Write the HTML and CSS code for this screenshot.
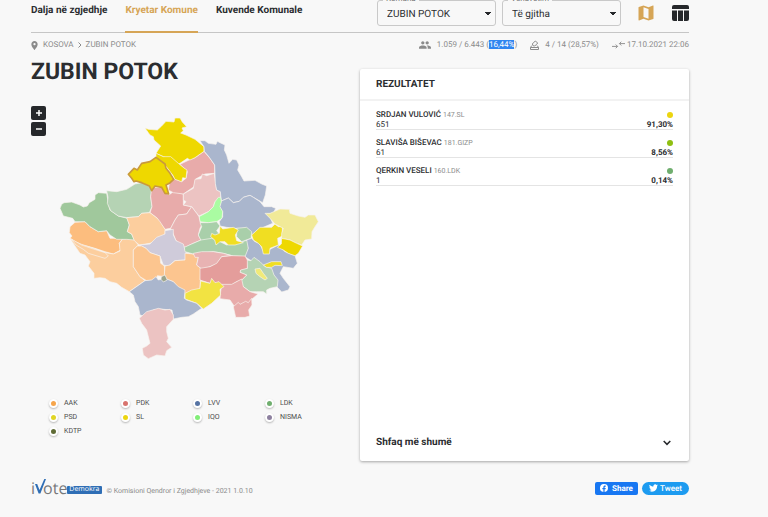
FILE: index.html
```html
<!DOCTYPE html>
<html lang="sq">
<head>
<meta charset="utf-8">
<meta name="viewport" content="width=device-width, initial-scale=1">
<title>Zubin Potok</title>
<link rel="stylesheet" href="styles.css">
</head>
<body>
<div class="page">
  <header class="topbar">
    <nav class="tabs">
      <a class="tab" href="#">Dalja në zgjedhje</a>
      <a class="tab tab-active" href="#">Kryetar Komune</a>
      <a class="tab" href="#">Kuvende Komunale</a>
    </nav>
    <div class="filters">
      <div class="field">
        <label for="komuna">Komuna</label>
        <select id="komuna"><option>ZUBIN POTOK</option></select>
      </div>
      <div class="field">
        <label for="vendvotim">Vendvotim</label>
        <select id="vendvotim"><option>Të gjitha</option></select>
      </div>
      <button class="view-btn" aria-label="Map"><svg width="20" height="20" viewBox="0 0 24 24" fill="#d6a556"><path fill-rule="evenodd" d="M20.500 3l-.16.030L15 5.100 9 3 3.360 4.900c-.21.070-.36.250-.36.480V20.500c0 .28.220.500.500.500l.16-.03L9 18.900l6 2.100 5.640-1.900c.21-.07.360-.25.360-.48V3.500c0-.28-.22-.5-.5-.5zM15 19l-6-2.110V5l6 2.110V19z"/></svg></button>
      <button class="view-btn" aria-label="Table"><svg width="17" height="16" viewBox="0 0 17 16" fill="#26282b"><path d="M2 0h13q2 0 2 2v2H0V2q0-2 2-2zM0 5.500h5V16H2q-2 0-2-2zM6 5.500h5V16H6zM12 5.500h5V14q0 2-2 2h-3z"/></svg></button>
    </div>
  </header>

  <div class="subbar">
    <nav class="crumbs">
      <svg width="7" height="9" viewBox="0 0 14 20" fill="#8b8b8b"><path fill-rule="evenodd" d="M7 0C3.130 0 0 3.130 0 7c0 5.250 7 13 7 13s7-7.750 7-13c0-3.870-3.130-7-7-7zm0 4.500a2.500 2.500 0 1 1 0 5 2.500 2.500 0 0 1 0-5z"/></svg>
      <a href="#">KOSOVA</a>
      <svg width="4" height="6" viewBox="0 0 4 6" fill="none" stroke="#8b8b8b" stroke-width="1"><path d="M.5.5 3 3 .5 5.500"/></svg>
      <a href="#">ZUBIN POTOK</a>
    </nav>
    <div class="stats">
      <span class="stat"><svg width="12" height="8" viewBox="1 5 22 14" fill="#8b8b8b"><path d="M16 11c1.660 0 2.990-1.340 2.990-3S17.660 5 16 5s-3 1.340-3 3 1.340 3 3 3zm-8 0c1.660 0 2.990-1.340 2.990-3S9.660 5 8 5 5 6.340 5 8s1.340 3 3 3zm0 2c-2.330 0-7 1.170-7 3.500V19h14v-2.500c0-2.330-4.670-3.500-7-3.500zm8 0c-.29 0-.62.020-.97.050 1.160.84 1.970 1.970 1.970 3.450V19h6v-2.500c0-2.330-4.670-3.500-7-3.500z"/></svg><span>1.059 / 6.443 (<mark>16,44%</mark>)</span></span>
      <span class="stat"><svg width="9" height="11" viewBox="0 0 18 22" fill="none" stroke="#8b8b8b" stroke-width="2"><path d="M4 11 1 14.500V19h16v-4.500L14 11M1 15h16M4.500 8l6-6 5 4-6 6H7z"/></svg><span>4 / 14 (28,57%)</span></span>
      <span class="stat"><svg width="13" height="8" viewBox="0 0 14 8" fill="none" stroke="#8b8b8b"><path d="M0 5.500h6M4 3.500l2 2-2 2M14 2.500H8M10 .5l-2 2 2 2"/></svg><span>17.10.2021 22:06</span></span>
    </div>
  </div>

  <main class="content">
    <section class="map-panel">
      <h1>ZUBIN POTOK</h1>
      <div class="map-area">
        <div class="zoom">
          <button aria-label="Zoom in"><svg width="8" height="8" viewBox="0 0 8 8" stroke="#fff" stroke-width="1.500"><path d="M4 1v6M1 4h6"/></svg></button>
          <button aria-label="Zoom out"><svg width="8" height="8" viewBox="0 0 8 8" stroke="#fff" stroke-width="1.500"><path d="M1 4h6"/></svg></button>
        </div>
        <svg class="map" viewBox="0 0 840 765" role="img" aria-label="Kosova">
          <polygon class="orange" points="60,350 75,337 105,335 120,350 145,365 170,362 180,385 218,385 208,400 212,420 190,432 165,425 135,415 110,408 95,405 75,395 60,385 66,378 58,368"/>
          <polygon class="orange-light" points="60,385 75,395 95,403 130,415 160,427 190,432 210,423 208,400 218,387 245,385 253,390 265,405 250,420 250,470 270,500 285,512 245,540 238,545 215,532 200,520 180,515 165,505 150,503 132,505 132,490 115,468 120,455 105,435 90,430 75,408"/>
          <polygon class="orange-light" points="64,387 78,405 100,418 115,430 165,445 175,438 165,428 130,417 95,405"/>
          <polygon class="green" points="30,295 35,283 42,278 65,276 90,285 100,291 112,288 118,278 135,268 135,255 145,248 170,250 175,280 180,300 205,318 232,325 238,345 232,365 245,372 253,390 230,388 200,388 180,375 170,362 145,365 120,350 105,335 75,335 68,325 40,318"/>
          <polygon class="green-light" points="170,242 200,245 230,238 255,222 275,218 298,228 307,240 302,260 306,290 298,308 275,310 265,320 230,323 205,318 182,302 172,280 174,262"/>
          <polygon class="rose" points="305,232 335,232 345,250 358,254 370,245 400,252 400,285 425,290 410,312 385,315 375,330 362,355 345,358 325,332 322,325 300,308 306,290 302,260"/>
          <polygon class="rose" points="370,205 395,215 408,205 412,185 390,163 417,150 435,143 462,124 480,145 494,165 494,190 465,192 437,207 432,230 400,252 370,248 355,240 358,220"/>
          <polygon class="pink" points="400,252 430,235 435,208 453,206 457,192 470,197 493,190 497,222 500,240 511,245 512,262 495,275 490,290 475,305 447,318 440,310 425,290 400,285 408,275 400,270"/>
          <polygon class="yellow" points="285,54 295,58 322,60 335,48 348,34 372,36 375,24 390,24 397,36 410,50 396,54 400,62 392,69 408,75 435,88 462,110 462,124 435,143 420,150 412,145 390,160 385,162 362,148 340,140 318,130 332,108 312,90 310,80 300,75 295,68"/>
          <polygon class="yellow" points="318,130 340,140 362,140 385,160 402,174 411,180 408,205 398,203 395,215 375,208 368,195 345,165 318,142"/>
          <polygon class="blue" points="450,92 465,92 475,100 498,103 502,94 510,98 525,105 523,120 530,135 537,160 548,148 560,150 567,165 563,180 575,200 582,213 615,211 635,222 650,228 646,255 638,278 610,262 600,256 580,262 568,274 550,278 535,264 514,273 511,245 500,240 496,220 494,165 478,142 463,124 462,110"/>
          <polygon class="blue" points="514,273 535,264 550,278 568,274 580,262 600,256 610,262 630,275 642,290 665,290 677,295 670,310 650,312 662,325 668,340 640,352 620,362 605,375 585,355 555,355 530,352 510,348 508,335 518,320 518,305 508,290"/>
          <polygon class="lime" points="505,262 512,262 514,275 510,290 518,305 516,325 500,335 475,338 450,335 447,320 475,305 490,290 495,275"/>
          <polygon class="orange-light" points="230,323 265,320 275,310 300,308 322,325 330,335 345,358 345,372 325,387 300,400 268,405 253,392 245,372 232,365 238,345"/>
          <polygon class="rose-light" points="362,355 375,330 385,315 410,312 425,290 440,310 447,320 450,335 455,345 450,355 445,375 453,390 425,402 405,412 390,402 378,392 370,372"/>
          <polygon class="lilac" points="268,405 300,402 320,382 345,372 345,362 370,358 370,375 378,392 400,402 405,420 412,435 405,450 375,452 355,468 340,465 330,438 300,428 288,415"/>
          <polygon class="orange-mid" points="250,420 262,408 275,408 288,415 300,428 330,438 332,460 343,468 345,500 322,497 318,510 290,512 270,500 250,470"/>
          <polygon class="orange-mid" points="345,468 360,465 375,452 405,450 405,430 430,432 445,442 440,465 452,475 450,540 420,545 408,555 390,540 370,515 350,508 343,495"/>
          <polygon class="green-mid" points="450,338 475,338 500,335 510,348 500,362 515,380 482,388 455,395 445,375 455,350"/>
          <polygon class="green-mid" points="403,412 425,402 453,390 485,385 500,390 530,405 575,395 595,390 595,415 590,440 550,438 520,430 490,425 470,428 430,432 405,425"/>
          <polygon class="green-mid" points="560,355 590,352 605,365 603,385 575,395 560,380"/>
          <polygon class="yellow-mid" points="485,370 495,375 508,370 510,348 518,357 550,352 565,360 556,375 560,392 580,398 555,405 535,405 525,395 510,395 498,405 494,390 482,380"/>
          <polygon class="blue" points="590,390 605,385 615,395 628,400 645,432 660,418 685,405 705,425 735,437 742,460 730,475 700,470 690,490 700,505 720,530 715,540 695,546 685,535 675,525 675,500 650,475 625,460 600,450 585,440 595,415"/>
          <polygon class="yellow-mid" points="605,375 630,352 665,352 675,342 685,350 697,350 697,378 683,385 685,405 660,415 658,432 640,432 635,410 625,400 610,390"/>
          <polygon class="cream" points="645,310 660,310 690,297 718,298 720,310 745,318 765,322 775,315 795,315 805,335 795,350 786,365 785,387 765,390 755,405 740,400 720,390 695,385 695,370 700,355 675,342 660,325"/>
          <polygon class="yellow" points="695,385 720,390 740,400 758,408 745,430 735,437 715,430 700,420 682,412 694,402"/>
          <polygon class="green-light" points="590,450 603,452 612,442 630,455 645,470 665,475 672,495 684,510 682,530 660,535 650,540 650,552 640,545 620,545 600,545 580,530 570,515 590,495 570,487 572,478 592,475"/>
          <polygon class="yellow-mid" points="640,465 665,455 693,455 697,467 675,466 665,472 650,472"/>
          <polygon class="cream-strong" points="615,477 630,475 640,490 652,505 645,510 630,500 618,490"/>
          <polygon class="rose-light" points="430,430 455,425 490,425 520,430 545,437 515,440 500,462 475,472 455,477 440,465 445,442 435,442"/>
          <polygon class="red" points="450,475 480,470 500,460 515,440 545,437 585,438 592,450 592,475 572,480 570,487 590,495 575,510 560,515 545,525 515,525 480,520 450,510"/>
          <polygon class="rose" points="515,523 545,523 575,507 580,530 600,545 624,552 605,568 600,590 555,592 540,570 510,566 512,545"/>
          <polygon class="rose" points="550,590 565,577 570,583 587,574 595,578 605,565 606,585 596,600 599,618 585,622 557,622"/>
          <polygon class="yellow-soft" points="405,550 425,540 450,535 452,513 480,520 485,505 495,518 507,515 522,530 510,538 512,555 485,580 460,597 440,580 405,567"/>
          <polygon class="blue" points="238,545 285,512 305,510 318,500 325,510 345,505 370,515 385,530 405,540 403,565 410,570 440,580 455,595 430,612 415,620 395,622 370,627 366,600 330,597 310,600 280,618 270,615 265,590 255,575 250,555"/>
          <polygon class="pink" points="268,625 290,605 325,595 345,600 360,598 370,615 370,628 350,650 350,665 355,685 350,695 365,712 350,722 345,738 320,735 295,746 280,735 277,715 290,708 300,700 290,660 275,640"/>
          <polygon class="olive" points="334,500 345,495 352,510 340,516 333,508"/>
          <polygon class="yellow selected" points="235,193 252,175 262,180 275,160 300,155 318,142 345,162 348,175 360,190 371,208 358,220 348,225 356,252 345,250 335,232 315,228 305,242 298,228 275,218 258,213 252,215 245,205"/>
        </svg>
      </div>
      <ul class="legend">
        <li><i class="dot aak"></i>AAK</li>
        <li><i class="dot pdk"></i>PDK</li>
        <li><i class="dot lvv"></i>LVV</li>
        <li><i class="dot ldk"></i>LDK</li>
        <li><i class="dot psd"></i>PSD</li>
        <li><i class="dot sl"></i>SL</li>
        <li><i class="dot iqo"></i>IQO</li>
        <li><i class="dot nisma"></i>NISMA</li>
        <li><i class="dot kdtp"></i>KDTP</li>
      </ul>
    </section>

    <section class="card">
      <h2>REZULTATET</h2>
      <ul class="results">
        <li>
          <div class="line"><span><b>SRDJAN VULOVIĆ</b> <small>147.SL</small></span><i class="mark sl"></i></div>
          <div class="line"><span>651</span><b>91,30%</b></div>
        </li>
        <li>
          <div class="line"><span><b>SLAVIŠA BIŠEVAC</b> <small>181.GIZP</small></span><i class="mark gizp"></i></div>
          <div class="line"><span>61</span><b>8,56%</b></div>
        </li>
        <li>
          <div class="line"><span><b>QERKIN VESELI</b> <small>160.LDK</small></span><i class="mark ldk"></i></div>
          <div class="line"><span>1</span><b>0,14%</b></div>
        </li>
      </ul>
      <button class="more">Shfaq më shumë<svg width="8" height="6" viewBox="0 0 8 6" fill="none" stroke="#26282b" stroke-width="1.500"><path d="M.7.9 4 4.300 7.300.9"/></svg></button>
    </section>
  </main>

  <footer class="footer">
    <div class="brand">
      <span class="logo"><span class="word">i<svg width="11" height="15" viewBox="0 0 11 15" fill="#2f6eb5"><path d="M0 5h2.200l2.300 6L9.300 0H11L5.400 14.500H3.600z"/></svg>ote</span><span class="tag">Demokra</span></span>
      <span class="copy">© Komisioni Qendror i Zgjedhjeve - 2021 1.0.10</span>
    </div>
    <div class="social">
      <button class="share"><svg width="8" height="8" viewBox="0 0 24 24" fill="#fff"><path d="M24 12a12 12 0 1 0-13.900 11.850v-8.400H7.100V12h3V9.400c0-3 1.800-4.700 4.500-4.700 1.300 0 2.700.24 2.700.24v3h-1.500c-1.500 0-2 .9-2 1.900V12h3.400l-.5 3.450h-2.900v8.400A12 12 0 0 0 24 12z"/></svg>Share</button>
      <button class="tweet"><svg width="9" height="8" viewBox="0 2 24 20" fill="#fff"><path d="M23.950 4.570a10 10 0 0 1-2.820.770 4.960 4.960 0 0 0 2.160-2.720c-.95.560-2 .96-3.130 1.180a4.920 4.920 0 0 0-8.380 4.480C7.690 8.090 4.070 6.130 1.640 3.160a4.920 4.920 0 0 0 1.520 6.570 4.900 4.900 0 0 1-2.230-.61v.06a4.920 4.920 0 0 0 3.950 4.830 5 5 0 0 1-2.210.080 4.940 4.940 0 0 0 4.600 3.420A9.870 9.870 0 0 1 0 19.540a14 14 0 0 0 7.550 2.210c9.050 0 14-7.500 14-13.980l-.02-.64a10 10 0 0 0 2.420-2.560z"/></svg>Tweet</button>
    </div>
  </footer>
</div>
</body>
</html>
```
FILE: styles.css
```css
* { box-sizing: border-box; }

body {
  margin: 0;
  background: #f8f8f8;
  color: #2b2d30;
  font-family: Roboto, "Liberation Sans", sans-serif;
  font-size: 10px;
  line-height: 14px;
  text-rendering: geometricPrecision;
}

button, select { font-family: inherit; color: inherit; text-rendering: inherit; }
button { padding: 0; border: 0; background: none; }
a { color: inherit; text-decoration: none; }
ul { margin: 0; padding: 0; list-style: none; }
svg { display: block; flex: none; }

.page { padding: 0 79px 0 31px; }

.topbar {
  display: flex;
  justify-content: space-between;
  height: 33px;
  border-bottom: 1px solid #c6c6c6;
}

.tabs { display: flex; gap: 18px; }

.tab {
  height: 33px;
  padding-top: 4px;
  font-size: 10px;
  font-weight: 700;
  white-space: nowrap;
}

.tab-active { color: #d6a556; border-bottom: 2px solid #d6a556; }

.filters { display: flex; align-items: center; gap: 6px; height: 26px; }
.field { position: relative; }

.field label {
  position: absolute;
  top: -7px;
  left: 6px;
  padding: 0 3px;
  background: #f8f8f8;
  color: #777;
  font-size: 8px;
  line-height: 12px;
}

.field select {
  display: block;
  width: 119px;
  height: 26px;
  padding: 2px 9px 0;
  border: 1px solid #c9c9c9;
  border-radius: 3px;
  appearance: none;
  background: linear-gradient(to bottom right, #26282b 50%, transparent 51%) no-repeat right 4px top 11px / 3px 4px,
    linear-gradient(to bottom left, #26282b 50%, transparent 51%) no-repeat right 7px top 11px / 3px 4px;
  font-size: 10px;
}

.view-btn { display: grid; place-items: center; width: 20px; margin-left: 9px; }
.view-btn:last-child { width: 17px; margin-left: 10px; }

.subbar {
  display: flex;
  justify-content: space-between;
  padding-top: 5px;
  color: #8b8b8b;
  font-size: 8px;
}

.crumbs, .stats, .stat { display: flex; align-items: center; }
.crumbs { gap: 4px; }
.crumbs a:first-of-type { margin-left: 1px; }
.stats { gap: 13px; }
.stat { gap: 6px; }
.stat:last-child { gap: 2px; }
mark { background: #2f86f0; color: #fff; }

.content {
  display: grid;
  grid-template-columns: 1fr 1fr;
  align-items: start;
}

h1 {
  margin: 6px 0 0;
  font-size: 23px;
  font-weight: 700;
  line-height: 28px;
}

.map-area { display: grid; grid-template-columns: 19px 1fr; margin-top: 20px; }
.zoom { display: grid; align-content: start; gap: 2px; }

.zoom button {
  display: grid;
  place-items: center;
  width: 15px;
  height: 14px;
  border-radius: 2px;
  background: #26282b;
}

.map { width: 100%; max-width: 280px; margin-top: 4px; }
.map polygon { stroke: #f7f3ee; stroke-width: 2; stroke-linejoin: round; }
.map .orange { fill: #fcbd7e; }
.map .orange-mid { fill: #fcc58f; }
.map .orange-light { fill: #fcce9e; }
.map .green { fill: #a0c89c; }
.map .green-mid { fill: #a9cfaa; }
.map .green-light { fill: #b5d3b4; }
.map .lime { fill: #aafca2; }
.map .rose { fill: #e8abaa; }
.map .rose-light { fill: #e8b3b3; }
.map .pink { fill: #ecc3c2; }
.map .red { fill: #e49d9b; }
.map .blue { fill: #aab6cd; }
.map .lilac { fill: #cfcbda; }
.map .yellow { fill: #eed800; }
.map .yellow-mid { fill: #f0de22; }
.map .yellow-soft { fill: #f2e342; }
.map .cream { fill: #f1ea98; }
.map .cream-strong { fill: #f0ea78; }
.map .olive { fill: #9ca58c; }
.map .selected { stroke: #c99a3c; stroke-width: 5; }

.legend {
  display: grid;
  grid-template-columns: repeat(4, 72px);
  padding: 31px 0 0 18px;
  font-size: 7px;
  color: #4c4c4c;
}

.legend li { display: flex; align-items: center; gap: 6px; }

.dot {
  width: 9px;
  height: 9px;
  border: 2px solid #fff;
  border-radius: 50%;
  box-shadow: 0 1px 2px #0004;
}

.mark { width: 6px; height: 6px; border-radius: 50%; }
.aak { background-color: #f6a54b; }
.pdk { background-color: #d8736e; }
.lvv { background-color: #5673a3; }
.ldk { background-color: #6fae6e; }
.psd { background-color: #e0d524; }
.sl { background-color: #ecd50f; }
.iqo { background-color: #82ee78; }
.nisma { background-color: #8d809f; }
.kdtp { background-color: #5f6b35; }
.gizp { background-color: #8fbf12; }

.card {
  display: flex;
  flex-direction: column;
  min-height: 392px;
  margin-top: 17px;
  background: #fff;
  border-radius: 2px;
  box-shadow: 0 1px 3px #0005;
}

.card h2 {
  margin: 0;
  padding: 9px 16px 7px;
  border-bottom: 2px solid #f2f2f2;
  font-size: 10px;
  font-weight: 700;
  line-height: 14px;
}

.results { padding: 9px 16px; }

.results li {
  height: 20px;
  margin-bottom: 8px;
  border-bottom: 1px solid #e4e4e4;
  font-size: 8px;
}

.line { display: flex; align-items: center; justify-content: space-between; height: 10px; }
.results b { font-weight: 500; }
.results .line b:last-child { font-weight: 700; }
.results small { color: #8b8b8b; font-size: 7px; }

.more {
  display: flex;
  align-items: center;
  justify-content: space-between;
  margin-top: auto;
  padding: 12px 18px 11px 16px;
  font-size: 10px;
  font-weight: 700;
  line-height: 14px;
}

.footer {
  display: flex;
  justify-content: space-between;
  align-items: center;
  margin-top: 17px;
}

.brand, .social { display: flex; align-items: center; }
.brand { gap: 5px; }
.logo { display: flex; align-items: flex-end; }

.word {
  display: flex;
  align-items: flex-end;
  color: #77787b;
  font-family: "Open Sans", sans-serif;
  font-size: 16px;
  line-height: 18px;
}

.word svg { margin: 0 -3px 3px 0; }

.tag {
  margin-bottom: 3px;
  padding: 0 2px;
  border-radius: 1px;
  background: #2f6eb5;
  color: #fff;
  font-family: "Open Sans", sans-serif;
  font-size: 7px;
  line-height: 8px;
}

.copy { padding-top: 6px; color: #8b8b8b; font-size: 7px; }
.social { gap: 4px; }

.social button {
  display: flex;
  align-items: center;
  justify-content: center;
  gap: 4px;
  height: 13px;
  border-radius: 2px;
  color: #fff;
  font-size: 8px;
  font-weight: 500;
}

.social .share { width: 43px; background: #1877f2; font-weight: 700; }
.social .tweet { width: 47px; gap: 2px; border-radius: 7px; background: #1d9bf0; }
```
